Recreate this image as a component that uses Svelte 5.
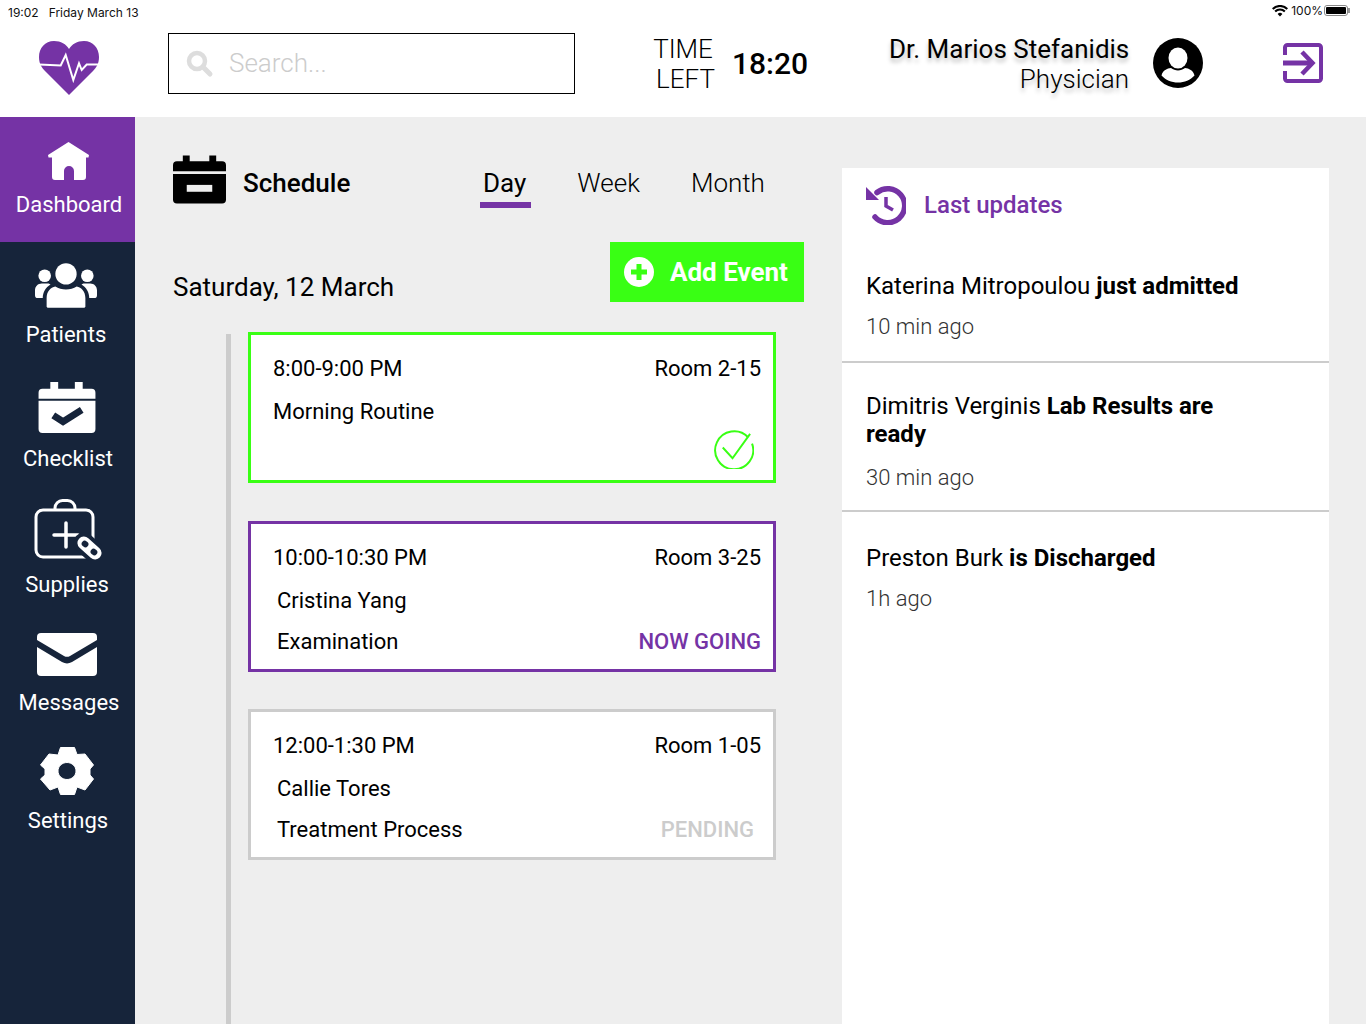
<script>
	const nav = [
		{ label: 'Dashboard', id: 'home', active: true },
		{ label: 'Patients', id: 'patients' },
		{ label: 'Checklist', id: 'checklist' },
		{ label: 'Supplies', id: 'supplies' },
		{ label: 'Messages', id: 'messages' },
		{ label: 'Settings', id: 'settings' }
	];

	const updates = [
		{ name: 'Katerina Mitropoulou', what: 'just admitted', ago: '10 min ago' },
		{ name: 'Dimitris Verginis', what: 'Lab Results are ready', ago: '30 min ago' },
		{ name: 'Preston Burk', what: 'is Discharged', ago: '1h ago' }
	];
</script>

<div class="page">
	<div class="status">
		<span>19:02</span>
		<span class="date">Friday March 13</span>
		<span class="spacer"></span>
		<svg class="wifi" width="16" height="12" viewBox="0 0 16 12">
			<path d="M8 11.500 5.600 8.900a3.400 3.400 0 0 1 4.800 0ZM3.900 7.200 2.400 5.700a8 8 0 0 1 11.200 0l-1.500 1.500a5.900 5.900 0 0 0-8.200 0ZM1.400 4.700 0 3.200a11.400 11.400 0 0 1 16 0l-1.400 1.500a9.400 9.400 0 0 0-13.200 0Z" fill="#000"/>
		</svg>
		<span class="pct">100%</span>
		<span class="battery"><span class="charge"></span></span>
	</div>

	<header>
		<div class="logo">
			<svg width="60" height="55" viewBox="0 0 60 55">
				<path d="M30 9C27 4 22 1 15 1 6 1 0 8 0 17c0 7 3 11 6 14l24 24 24-24c3-3 6-7 6-14 0-9-6-16-15-16-7 0-12 3-15 8Z" fill="#7533a5"/>
				<path d="M0 24.500 21.700 25.500 26.700 15 34.300 40 40 23.300 42.700 30 47.700 24.500H60" fill="none" stroke="#fff" stroke-width="2"/>
			</svg>
		</div>
		<div class="search">
			<svg width="28" height="28" viewBox="0 0 28 28">
				<circle cx="11" cy="11" r="8" fill="none" stroke="#ddd" stroke-width="4.500"/>
				<path d="m17 17 7 7" stroke="#ddd" stroke-width="5" stroke-linecap="round"/>
			</svg>
			<span class="search-text">Search...</span>
		</div>
		<div class="left-label">TIME<span class="left-second">LEFT</span></div>
		<div class="left-value">18:20</div>
		<div class="user">
			<div class="user-name">Dr. Marios Stefanidis</div>
			<div class="user-role">Physician</div>
		</div>
		<svg class="avatar" width="50" height="50" viewBox="0 0 50 50">
			<circle cx="25" cy="25" r="25" fill="#000"/>
			<ellipse cx="25" cy="20" rx="9.500" ry="10.500" fill="#fff"/>
			<path d="M8.500 37.500C10 32 14 30.500 18 30c2 1.500 4.500 2.500 7 2.500s5-1 7-2.500c4 .5 8 2 9.500 7.500C37.500 42 31.500 44.500 25 44.500S12.500 42 8.500 37.500Z" fill="#fff"/>
		</svg>
		<svg class="exit" width="40" height="40" viewBox="0 0 40 40">
			<path d="M2 12V4.500A2.500 2.500 0 0 1 4.500 2h31A2.500 2.500 0 0 1 38 4.500v31a2.500 2.500 0 0 1-2.500 2.500h-31A2.500 2.500 0 0 1 2 35.500V28" fill="none" stroke="#7533a5" stroke-width="4"/>
			<path d="M0 17.500h27v5H0Z" fill="#7533a5"/>
			<path d="m19 9 10.500 11L19 31" fill="none" stroke="#7533a5" stroke-width="4.500"/>
		</svg>
	</header>

	<div class="body">
		<nav>
			{#each nav as item}
				<div class="nav-item {item.id}" class:active={item.active}>
					{#if item.id === 'home'}
						<svg width="41" height="38" viewBox="0 0 41 38">
							<path d="M20.500 0 41 13l-.5 2.500H38V35a3 3 0 0 1-3 3H26V29a5 5 0 0 0-10 0v9H7a3 3 0 0 1-3-3V15.500H.5L0 13Z" fill="#fff"/>
						</svg>
					{:else if item.id === 'patients'}
						<svg width="62" height="45" viewBox="0 0 64 46">
							<circle cx="32" cy="11" r="11" fill="#fff"/>
							<circle cx="10" cy="13" r="6.500" fill="#fff"/>
							<circle cx="54" cy="13" r="6.500" fill="#fff"/>
							<path d="M12 45v-9c0-7 4-11 9-12 3 2 7 3 11 3s8-1 11-3c5 1 9 5 9 12v9a1.500 1.500 0 0 1-1.500 1h-37A1.500 1.500 0 0 1 12 45Z" fill="#fff"/>
							<path d="M8 36H3a3 3 0 0 1-3-3v-5c0-4 3-7 7-7h5c1 0 3 0 4 1-5 3-8 8-8 14ZM56 36h5a3 3 0 0 0 3-3v-5c0-4-3-7-7-7h-5c-1 0-3 0-4 1 5 3 8 8 8 14Z" fill="#fff"/>
						</svg>
					{:else if item.id === 'checklist'}
						<svg width="58" height="51" viewBox="0 0 58 52">
							<path d="M12 0h8v7h17V0h8v7h9a4 4 0 0 1 4 4v6H0v-6a4 4 0 0 1 4-4h8Z" fill="#fff"/>
							<path d="M0 19h58v29a4 4 0 0 1-4 4H4a4 4 0 0 1-4-4Z" fill="#fff"/>
							<path d="m15 34 10 6.500 19-12" fill="none" stroke="#16243a" stroke-width="7"/>
						</svg>
					{:else if item.id === 'supplies'}
						<svg width="68" height="62" viewBox="0 0 68 62">
							<rect x="2" y="11" width="57" height="47" rx="7" fill="none" stroke="#fff" stroke-width="3"/>
							<path d="M21 12V9a7.500 7.500 0 0 1 7.500-7.500h5A7.500 7.500 0 0 1 41 9v3" fill="none" stroke="#fff" stroke-width="3"/>
							<path d="M32 24v24M20 36h24" stroke="#fff" stroke-width="3.500" stroke-linecap="round"/>
							<g transform="rotate(42 55.500 49)">
								<rect x="40.500" y="41.500" width="30" height="15" rx="7.500" fill="#16243a" stroke="#16243a" stroke-width="6"/>
								<rect x="41.500" y="42.500" width="28" height="13" rx="6.500" fill="#fff"/>
								<rect x="58" y="46" width="7" height="6" rx="3" fill="#16243a"/>
								<rect x="46" y="46" width="7" height="6" rx="3" fill="#16243a"/>
							</g>
						</svg>
					{:else if item.id === 'messages'}
						<svg width="60" height="43" viewBox="0 0 60 43">
							<path d="M4 0h52a4 4 0 0 1 4 4v3L33 23a6 6 0 0 1-6 0L0 7V4a4 4 0 0 1 4-4Z" fill="#fff"/>
							<path d="M0 14 25 29a10 10 0 0 0 10 0L60 14v25a4 4 0 0 1-4 4H4a4 4 0 0 1-4-4Z" fill="#fff"/>
						</svg>
					{:else}
						<svg width="54" height="48" viewBox="0 0 54 48">
							<path fill-rule="evenodd" d="M20.500 .5h14L37 7.500l8-.5 8.500 11-3.500 4v6l3.500 4L45 43l-8-3-2.500 7.500h-14L18 40l-8 3L.5 32 5 28v-6L.5 18 9 7l9 1ZM27 15.500c-5 0-9 3.800-9 8.500s4 8.500 9 8.500 9-3.800 9-8.500-4-8.500-9-8.500Z" fill="#fff" stroke="#fff" stroke-width="1" stroke-linejoin="round"/>
						</svg>
					{/if}
					<span>{item.label}</span>
				</div>
			{/each}
		</nav>

		<main>
			<div class="schedule-head">
				<svg width="53" height="49" viewBox="0 0 54 49">
					<path d="M10 0h7v6h20V0h7v6h6a4 4 0 0 1 4 4v6H0v-6a4 4 0 0 1 4-4h6Z" fill="#000"/>
					<path d="M0 19h54v26a4 4 0 0 1-4 4H4a4 4 0 0 1-4-4Z" fill="#000"/>
					<rect x="14" y="30" width="26" height="7" fill="#eee"/>
				</svg>
				<h2>Schedule</h2>
				<div class="tabs">
					<span class="tab on">Day</span>
					<span class="tab">Week</span>
					<span class="tab">Month</span>
				</div>
			</div>

			<div class="date-row">
				<div class="day">Saturday, 12 March</div>
				<div class="add">
					<svg width="30" height="30" viewBox="0 0 30 30">
						<circle cx="15" cy="15" r="15" fill="#fff"/>
						<path d="M15 7v16M7 15h16" stroke="#39ff14" stroke-width="5"/>
					</svg>
					Add Event
				</div>
			</div>

			<div class="timeline">
				<div class="card done">
					<div class="row"><span>8:00-9:00 PM</span><span>Room 2-15</span></div>
					<div class="row">Morning Routine</div>
					<svg class="tick" width="41" height="41" viewBox="0 0 42 42">
						<path d="M36 9.500A19.500 19.500 0 1 0 40 16" fill="none" stroke="#39ff14" stroke-width="2"/>
						<path d="m10 20 10 11L38 6" fill="none" stroke="#39ff14" stroke-width="2"/>
					</svg>
				</div>
				<div class="card now">
					<div class="row"><span>10:00-10:30 PM</span><span>Room 3-25</span></div>
					<div class="row name">Cristina Yang</div>
					<div class="row name"><span>Examination</span><span class="going">NOW GOING</span></div>
				</div>
				<div class="card later">
					<div class="row"><span>12:00-1:30 PM</span><span>Room 1-05</span></div>
					<div class="row name">Callie Tores</div>
					<div class="row name"><span>Treatment Process</span><span class="pending">PENDING</span></div>
				</div>
			</div>
		</main>

		<aside>
			<div class="aside-head">
				<svg width="40" height="41" viewBox="0 0 40 41">
					<path d="M9 33A17 17 0 1 0 11 8.500" fill="none" stroke="#7533a5" stroke-width="5.500" stroke-linecap="round"/>
					<path d="M0 3V16H13Z" fill="#7533a5"/>
					<path d="M20 13v9l7 4" fill="none" stroke="#7533a5" stroke-width="3.500"/>
				</svg>
				<span>Last updates</span>
			</div>
			{#each updates as u}
				<div class="update">
					<div class="update-title">{u.name} <b>{u.what}</b></div>
					<div class="update-time">{u.ago}</div>
				</div>
			{/each}
		</aside>
	</div>
</div>

<style>
	:global(body) {
		font-family: Roboto, sans-serif;
		color: #000;
	}

	.page {
		height: 1024px;
		overflow: hidden;
		display: flex;
		flex-direction: column;
	}

	.status {
		height: 22px;
		flex: none;
		box-sizing: border-box;
		padding: 2px 15px 0 8px;
		display: flex;
		align-items: center;
		font-family: Inter, Roboto, sans-serif;
		font-size: 12px;
		color: #111;
	}

	.date {
		margin-left: 10px;
	}

	.spacer {
		flex: 1;
	}

	.pct {
		margin-left: 3px;
		margin-top: -3px;
	}

	.wifi {
		margin-top: -3px;
	}

	.battery {
		position: relative;
		width: 24px;
		height: 11px;
		margin: -3px 3px 0 1px;
		border: 1px solid #888;
		border-radius: 3px;
		padding: 1px;
		box-sizing: border-box;
		display: flex;
	}

	.battery::after {
		content: '';
		position: absolute;
		right: -3px;
		top: 2px;
		width: 2px;
		height: 5px;
		background: #999;
	}

	.charge {
		flex: 1;
		background: #000;
		border-radius: 1px;
	}

	header {
		height: 95px;
		flex: none;
		box-sizing: border-box;
		padding-bottom: 12px;
		display: flex;
		align-items: center;
		background: #fff;
	}

	.logo {
		width: 135px;
		flex: none;
		display: flex;
		justify-content: center;
		margin: 8px -1.500px 0 1.500px;
	}

	.logo svg {
		display: block;
	}

	.search {
		width: 407px;
		height: 61px;
		margin-left: 33px;
		box-sizing: border-box;
		border: 1px solid #000;
		display: flex;
		align-items: center;
		gap: 15px;
		padding: 0 0 0 17px;
		font-size: 26px;
		font-weight: 300;
		color: #ccc;
	}

	.search-text {
		margin-top: -2px;
	}

	.left-label {
		width: 62px;
		margin: 1px 0 0 77px;
		text-align: center;
		font-size: 26px;
		font-weight: 300;
		line-height: 30px;
	}

	.left-second {
		display: block;
		padding-left: 4px;
	}

	.left-value {
		width: 75px;
		margin: -1px 0 0 18px;
		font-size: 30px;
		font-weight: 500;
		white-space: nowrap;
	}

	.user {
		width: 240px;
		margin: 1px 0 0 82px;
		text-align: right;
		font-size: 26px;
		line-height: 30px;
		text-shadow: 0 4px 4px rgba(0, 0, 0, 0.25);
		white-space: nowrap;
	}

	.user-role {
		font-weight: 300;
	}

	.avatar {
		margin: -1px 0 0 24px;
	}

	.exit {
		margin: -1px 0 0 80px;
	}

	.body {
		flex: 1;
		display: flex;
		background: #eee;
		min-height: 0;
	}

	nav {
		width: 135px;
		flex: none;
		background: #16243a;
		color: #fff;
		font-size: 22px;
	}

	.nav-item {
		display: flex;
		flex-direction: column;
		align-items: center;
		box-sizing: border-box;
	}

	.nav-item span {
		line-height: 26px;
		white-space: nowrap;
	}

	.home {
		height: 125px;
		background: #7533a5;
		padding: 25px 0 0 3px;
		gap: 12px;
	}

	.home svg {
		margin-right: 2px;
	}

	.patients {
		padding-top: 21px;
		gap: 14px;
		margin-left: -3px;
	}

	.checklist {
		padding: 34px 0 0 1px;
		gap: 13px;
	}

	.checklist svg {
		margin-right: 2px;
	}

	.supplies {
		padding-top: 27px;
		gap: 11px;
		margin-left: -1px;
	}

	.supplies svg {
		margin-left: 2px;
	}

	.messages {
		padding: 35px 0 0 3px;
		gap: 14px;
	}

	.messages svg {
		margin-right: 4px;
	}

	.settings {
		padding: 31px 0 0 1px;
		gap: 13px;
	}

	.settings svg {
		margin-right: 2px;
	}

	main {
		width: 669px;
		flex: none;
		padding: 38px 0 0 38px;
		box-sizing: border-box;
		display: flex;
		flex-direction: column;
		min-height: 0;
	}

	.schedule-head {
		display: flex;
		align-items: center;
		height: 49px;
	}

	h2 {
		margin: 7px 0 0 17px;
		font-size: 26px;
		font-weight: 500;
		width: 240px;
	}

	.tabs {
		display: flex;
		font-size: 26px;
		font-weight: 300;
		gap: 51px;
		margin-top: 7px;
	}

	.tab {
		position: relative;
		line-height: 30px;
	}

	.tab.on {
		font-weight: 400;
	}

	.tab.on::after {
		content: '';
		position: absolute;
		left: -3px;
		right: -5px;
		bottom: -10px;
		height: 6px;
		background: #7533a5;
	}

	.date-row {
		display: flex;
		justify-content: space-between;
		align-items: flex-end;
		margin-top: 38px;
		width: 631px;
	}

	.day {
		font-size: 26px;
		line-height: 30px;
	}

	.add {
		width: 194px;
		height: 60px;
		box-sizing: border-box;
		background: #39ff14;
		color: #fff;
		font-size: 26px;
		font-weight: 700;
		display: flex;
		align-items: center;
		gap: 16px;
		padding-left: 14px;
		white-space: nowrap;
	}

	.timeline {
		flex: 1;
		margin: 32px 0 0 53px;
		border-left: 5px solid #ccc;
		padding-left: 17px;
		display: flex;
		flex-direction: column;
		gap: 38px;
	}

	.card {
		position: relative;
		width: 528px;
		height: 151px;
		box-sizing: border-box;
		background: #fff;
		border: 3px solid #ccc;
		margin-top: -2px;
		margin-bottom: 2px;
		padding: 19px 12px 0 22px;
		font-size: 22px;
		line-height: 30px;
	}

	.done {
		border-color: #39ff14;
	}

	.now {
		border-color: #7533a5;
	}

	.later {
		margin-top: -3px;
	}

	.row {
		display: flex;
		justify-content: space-between;
		margin-bottom: 13px;
		white-space: nowrap;
	}

	.name {
		padding-left: 4px;
		margin-bottom: 11px;
	}

	.going {
		color: #7533a5;
		font-weight: 500;
	}

	.pending {
		color: #ccc;
		font-weight: 500;
		margin-right: 7px;
	}

	.tick {
		position: absolute;
		right: 19px;
		bottom: 11px;
	}

	aside {
		width: 487px;
		flex: none;
		margin: 51px 0 0 38px;
		background: #fff;
	}

	.aside-head {
		display: flex;
		align-items: center;
		gap: 18px;
		height: 74px;
		padding-left: 24px;
		color: #7533a5;
		font-size: 24px;
		font-weight: 500;
	}

	.aside-head svg {
		margin-bottom: 2px;
	}

	.update {
		padding: 30px 90px 20px 24px;
		border-bottom: 2px solid #ccc;
	}

	.update:nth-child(3) {
		padding-top: 29px;
		padding-bottom: 18px;
	}

	.update:nth-child(3) .update-time {
		margin-top: 16px;
	}

	.update:last-child {
		padding-top: 32px;
		border-bottom: 0;
	}

	.update-title {
		font-size: 24px;
		line-height: 28px;
	}

	.update-title b {
		font-weight: 700;
	}

	.update-time {
		margin-top: 13px;
		font-size: 22px;
		font-weight: 300;
		line-height: 28px;
		color: #333;
	}
</style>
